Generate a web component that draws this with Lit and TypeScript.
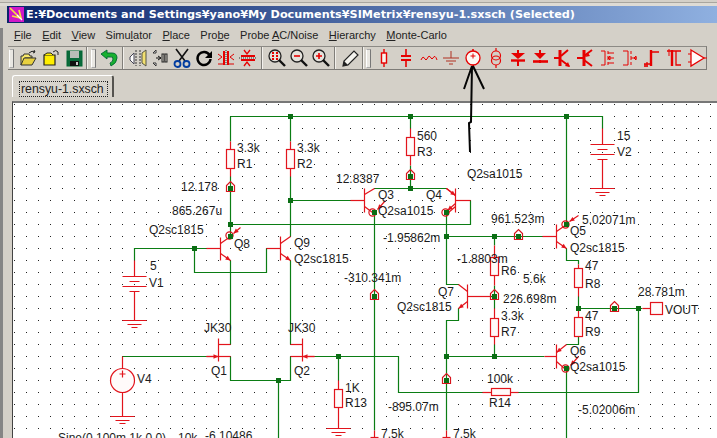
import { LitElement, html, css, svg } from "lit";
import { customElement } from "lit/decorators.js";

type L = [number, number, string];
const WIRES = [
  "230,116 602,116 602,128", "230,116 230,141", "230,176 230,236", "230,260 230,344", "230,356 230,380 290,380 290,356",
  "290,116 290,141", "290,176 290,236", "290,260 290,344", "134,260 134,248 206,248", "194,248 194,272 266,272 266,248",
  "290,200 350,200", "374,188 446,188", "410,116 410,128", "410,165 410,188", "374,212 374,430",
  "446,212 446,284 458,284", "458,308 458,320 446,320 446,430", "470,200 470,224 230,224", "446,236 542,236", "494,236 494,245",
  "494,285 494,308", "490,296 494,296", "494,344 494,356", "446,356 544,356", "566,116 566,224",
  "566,248 566,260 578,260 578,264", "578,296 578,308", "578,336 578,344 566,344", "578,308 642,308", "566,368 566,438",
  "122,356 206,356", "314,356 398,356 398,392 482,392", "518,392 638,392 638,308", "338,356 338,380", "278,380 278,438",
];
const REDS = [
  "230,141 230,149", "230,168 230,176", "290,141 290,149", "290,168 290,176", "410,128 410,137", "410,155 410,165",
  "494,245 494,257", "494,275 494,285", "494,308 494,318", "494,336 494,344", "578,264 578,268", "578,287 578,296",
  "578,308 578,317", "338,380 338,389", "338,407 338,428", "482,392 491,392", "510,392 518,392",
  "642,308 650,308", "374,430 374,438", "446,430 446,438", "122,356 122,368", "122,392 122,416",
  "134,260 134,276", "134,291 134,320", "602,128 602,144", "602,159 602,188",
  "206,248 220,248", "220,237 220,260", "220,243 230,236", "266,248 280,248", "280,236 280,260", "280,243 290,236",
  "350,200 364,200", "364,188 364,212", "364,194 374,188", "364,206 372,212", "455,188 455,212", "446,188 455,195",
  "455,206 448,212", "455,200 470,200", "542,236 556,236", "556,224 556,248", "556,231 566,224",
  "490,296 467,296", "467,284 467,308", "467,291 458,284", "544,356 556,356", "556,344 556,368", "556,361 564,368",
  "218,338 218,361", "218,344 230,344", "218,356 230,356", "302,338 302,361", "290,344 302,344", "290,356 302,356",
  "206,356 218,356", "302,356 314,356", "370,437 378,437", "442,437 450,437",
];
const ARROWS = [
  [220, 253, 230, 260], [280, 253, 290, 260], [556, 241, 566, 248], [240, 227, 233, 233], [385, 200, 377, 209],
  [455, 203, 447, 210], [578, 215, 569, 221], [578, 356, 570, 365], [467, 301, 458, 308],
  [566, 344, 556, 352], [446, 188, 455, 195], [206, 356, 218, 356], [314, 356, 302, 356],
];
const RES = [[226, 149, 8, 19], [286, 149, 8, 19], [406, 137, 8, 18], [490, 257, 8, 18], [490, 318, 8, 18], [574, 268, 8, 19], [574, 317, 8, 19], [334, 389, 8, 18], [491, 388, 19, 7]];
const NODES = [[290, 116], [410, 116], [566, 116], [230, 188], [230, 224], [230, 236], [194, 248], [290, 200], [410, 188], [410, 176], [374, 212], [446, 212], [446, 236], [494, 236], [518, 236], [566, 224], [494, 296], [374, 296], [446, 356], [446, 380], [338, 356], [278, 380], [494, 356], [578, 308], [614, 308], [638, 308], [566, 368]];
const HOUSES = [[230, 188], [410, 176], [518, 236], [374, 296], [446, 380], [494, 296], [614, 308]];
const RINGS = [[229, 235], [372, 212], [445, 212], [565, 224], [565, 368]];
const GNDS = [[602, 188], [134, 320], [122, 416], [338, 428]];
const BATS = [[602, 144], [134, 276]];
const LABELS: L[] = [
  [237, 152, "3.3k"], [237, 168, "R1"], [297, 152, "3.3k"], [297, 168, "R2"], [417, 140, "560"], [417, 156, "R3"],
  [181, 191, "12.178"], [172, 215, "865.267u"], [149, 234, "Q2sc1815"], [234, 248, "Q8"], [294, 247, "Q9"], [294, 263, "Q2sc1815"],
  [336, 183, "12.8387"], [378, 199, "Q3"], [426, 199, "Q4"], [378, 215, "Q2sa1015"], [467, 178, "Q2sa1015"], [383, 242, "-1.95862m"],
  [491, 223, "961.523m"], [582, 224, "5.02071m"], [570, 235, "Q5"], [570, 252, "Q2sc1815"], [617, 140, "15"], [617, 156, "V2"],
  [457, 263, "-1.8803m"], [501, 275, "R6"], [523, 283, "5.6k"], [503, 303, "226.698m"], [501, 320, "3.3k"], [501, 336, "R7"],
  [585, 270, "47"], [585, 288, "R8"], [585, 320, "47"], [585, 336, "R9"], [638, 296, "28.781m"], [665, 314, "VOUT"],
  [570, 355, "Q6"], [570, 371, "Q2sa1015"], [487, 383, "100k"], [489, 407, "R14"], [578, 414, "-5.02006m"], [438, 296, "Q7"],
  [397, 311, "Q2sc1815"], [344, 282, "-310.341m"], [388, 411, "-895.07m"], [288, 332, "JK30"], [204, 332, "JK30"], [211, 375, "Q1"],
  [294, 375, "Q2"], [345, 392, "1K"], [345, 407, "R13"], [381, 438, "7.5k"], [453, 438, "7.5k"], [150, 270, "5"], [149, 287, "V1"],
  [137, 383, "V4"], [58, 442, "Sine(0 100m 1k 0 0)"], [178, 442, "10k"], [205, 440, "-6.10486"],
];

const R = "#e60000";
const ICONS: Record<string, unknown> = {
  open: svg`<path d="M3 17V8h2l1-2h5l1 2h2v2H7L3 17z" fill="#f5e66a" stroke="#333"/><path d="M3 17l3-7h12l-4 7z" fill="#e8d040" stroke="#333"/><path d="M11 5q3-3 6-1M17 4l-1-2M17 4l-2 1" fill="none" stroke="#222"/>`,
  folder: svg`<path d="M3 7h11v10H3z" fill="#ffee00" stroke="#222" stroke-width="1.2"/><path d="M3 7l3-2h4l2 2" fill="#ffee00" stroke="#222"/><path d="M12 4q3-3 5 0v3" fill="none" stroke="#222"/>`,
  floppy: svg`<rect x="3" y="3" width="15" height="15" fill="#0a6a3a" stroke="#063"/><rect x="6" y="3" width="9" height="7" fill="#b9bdb8"/><rect x="6" y="13" width="9" height="5" fill="#111"/><rect x="12" y="14" width="2" height="3" fill="#ccc"/>`,
  undo: svg`<path d="M2 6l6-4v3h5q5 0 5 5t-6 8l-1-3q3-1 3-4t-3-2H8v2z" fill="#18b030" stroke="#063" stroke-width=".9"/>`,
  flipv: svg`<path d="M8 2v16M12 2v16" stroke="#333" stroke-dasharray="2 1" fill="none"/><path d="M6 5L2 9v3l4 4z" fill="#fff" stroke="#445" /><path d="M14 5l4-3v16l-4-3z" fill="#f2e070" stroke="#554"/>`,
  fliph: svg`<path d="M6 2l-3 3h3zM6 18l-3-3h3z" fill="#fff" stroke="#333"/><path d="M6 10h5M8 8l3 2-3 2" stroke="#111" fill="none"/><rect x="12" y="6" width="2" height="8" fill="none" stroke="#222"/><rect x="15" y="6" width="2" height="8" fill="none" stroke="#222"/>`,
  cut: svg`<path d="M4 1l9 12M16 1L7 13" stroke="#111" stroke-width="1.6"/><circle cx="5.5" cy="16" r="3" fill="none" stroke="#003ca0" stroke-width="1.8"/><circle cx="14.5" cy="16" r="3" fill="none" stroke="#003ca0" stroke-width="1.8"/>`,
  rot: svg`<path d="M15.5 7A6.5 6.5 0 1 0 16.5 11" fill="none" stroke="#000" stroke-width="2.4"/><path d="M18 3v7h-7z" fill="#000"/>`,
  mirv: svg`<path d="M8 3v14M12 3v14" stroke="${R}" stroke-width="2"/><path d="M2 6l4 3-4 3M18 6l-4 3 4 3M2 16h5M13 16h5" stroke="#d00" fill="none"/><path d="M10 2v16" stroke="#333" stroke-dasharray="1 1"/>`,
  mirh: svg`<path d="M3 8h14M3 12h14" stroke="${R}" stroke-width="2"/><path d="M6 2l3 4 3-4M6 18l3-4 3 4" stroke="${R}" fill="none" stroke-width="1.3"/><path d="M1 10h18" stroke="#333" stroke-dasharray="1 1"/>`,
  zoomf: svg`<circle cx="8" cy="8" r="6" fill="#e4e2dc" stroke="#222" stroke-width="1.3"/><path d="M12 12l6 6" stroke="#111" stroke-width="2.4"/><path d="M5 5h2M9 5h2M5 8h2M9 8h2M5 11h2M9 11h2" stroke="${R}" stroke-width="2"/>`,
  zoomo: svg`<circle cx="8" cy="8" r="6" fill="#e4e2dc" stroke="#222" stroke-width="1.3"/><path d="M12 12l6 6" stroke="#111" stroke-width="2.4"/><path d="M5 8h6" stroke="${R}" stroke-width="1.6"/>`,
  zoomi: svg`<circle cx="8" cy="8" r="6" fill="#e4e2dc" stroke="#222" stroke-width="1.3"/><path d="M12 12l6 6" stroke="#111" stroke-width="2.4"/><path d="M5 8h6M8 5v6" stroke="${R}" stroke-width="1.6"/>`,
  pencil: svg`<path d="M3 18l1-5L14 3l4 4L8 17z" fill="#f4f3ee" stroke="#222" stroke-width="1.2"/><path d="M3 18l1-5 4 4z" fill="#222"/>`,
  res: svg`<path d="M10 1v18" stroke="${R}" stroke-width="1.4"/><rect x="7.5" y="5" width="5" height="10" fill="#f7f3ee" stroke="${R}" stroke-width="1.4"/>`,
  cap: svg`<path d="M10 1v7M10 12v7" stroke="${R}" stroke-width="1.6"/><path d="M5 8h10M5 12h10" stroke="${R}" stroke-width="2.2"/>`,
  ind: svg`<path d="M2 12q2-5 4-1q1 2 2 0q2-5 4-1q1 2 2 0q2-4 4 2" fill="none" stroke="${R}"/>`,
  gnd: svg`<path d="M10 3v7M2 10h16M5 13h10M8 16h4" stroke="#b03020" fill="none"/>`,
  vsrc: svg`<path d="M10 1v3M10 16v3" stroke="${R}" stroke-width="1.6"/><circle cx="10" cy="10" r="7" fill="#fbf8f4" stroke="${R}" stroke-width="1.3"/><path d="M7.5 8h5M10 5.500v5" stroke="${R}"/>`,
  isrc: svg`<path d="M10 0v3M10 17v3" stroke="${R}" stroke-width="1.2"/><circle cx="10" cy="7.500" r="4.500" fill="none" stroke="${R}" stroke-width="1.2"/><circle cx="10" cy="12.500" r="4.500" fill="none" stroke="${R}" stroke-width="1.2"/>`,
  dio: svg`<path d="M10 2v3M10 12v6" stroke="${R}" stroke-width="2"/><path d="M3 5h14l-7 6z" fill="${R}"/><path d="M3 12.500h14" stroke="${R}" stroke-width="2.400"/>`,
  dio2: svg`<path d="M10 2v3M10 12v3" stroke="${R}" stroke-width="2"/><path d="M4 5h12l-6 6z" fill="${R}"/><path d="M3 13.500h15" stroke="${R}" stroke-width="2.600"/>`,
  npn: svg`<path d="M7 2v16" stroke="${R}" stroke-width="3"/><path d="M1 10h6" stroke="${R}" stroke-width="2"/><path d="M8 8l7-6M8 12l8 6" stroke="${R}" stroke-width="2"/><path d="M17 19l-5-1 3-4z" fill="${R}"/>`,
  pnp: svg`<path d="M9 2v16" stroke="${R}" stroke-width="3"/><path d="M2 10h7" stroke="${R}" stroke-width="2"/><path d="M9 8l8-6M9 12l8 6" stroke="${R}" stroke-width="2"/><path d="M10 9l3-4 2 3z" fill="${R}"/>`,
  nj: svg`<path d="M4 3h4v14H4" fill="none" stroke="${R}"/><path d="M11 3v3M11 8v4M11 14v3M11 5h6M11 15h6M11 10h6M13 8v4l-2-2z" fill="none" stroke="${R}"/>`,
  pj: svg`<path d="M3 3h5v14H3" fill="none" stroke="${R}"/><path d="M11 3v3M11 8v4M11 14v3M11 10h6M16 8v4l-2-2z" fill="none" stroke="${R}"/>`,
  nm: svg`<path d="M9 2v16" stroke="${R}" stroke-width="2.400"/><path d="M9 4h8M9 16H2M3 16v3M5 14v5" fill="none" stroke="${R}" stroke-width="1.300"/><path d="M2 18h4" stroke="${R}"/>`,
  pm: svg`<path d="M8 2v16" stroke="${R}" stroke-width="2.400"/><path d="M3 3h14M12 3v14h5" fill="none" stroke="${R}" stroke-width="1.300"/><path d="M5 1v7" stroke="${R}"/>`,
  opa: svg`<path d="M1 6h3M1 14h3M17 10h3" stroke="${R}"/><path d="M4 2l13 8-13 8z" fill="#fffafa" stroke="${R}" stroke-width="1.300"/>`,
};
const G1 = ["open", "folder", "floppy"];
const G3 = ["flipv", "fliph", "cut", "rot", "mirv", "mirh"];
const G4 = ["zoomf", "zoomo", "zoomi"];
const G5 = ["res", "cap", "ind", "gnd", "vsrc", "isrc", "dio", "dio2", "npn", "pnp", "nj", "pj", "nm", "pm", "opa"];
const MENU: [string, string, string][] = [["", "F", "ile"], ["", "E", "dit"], ["", "V", "iew"], ["Simu", "l", "ator"], ["", "P", "lace"], ["Pro", "b", "e"], ["Probe ", "A", "C/Noise"], ["", "H", "ierarchy"], ["", "M", "onte-Carlo"]];

@customElement("schematic-view")
class SchematicView extends LitElement {
  static styles = css`
    :host { display: block; flex: 1; min-width: 0; overflow: hidden; background: #fff; border-top: 2px solid #777; border-left: 1px solid #444; }
    svg { display: block; }
    .w, .r { fill: none; stroke-width: 1.2; }
    .w { stroke: #0b7d14; }
    .r, .b { stroke: #e2141c; }
    .b { fill: #fffafa; stroke-width: 1.2; }
    .h { fill: none; stroke: #d8141c; stroke-width: 1.2; }
    .n { fill: #0b6e14; }
    .a { fill: #e2141c; }
    .t { font: 12px "Liberation Sans", Arial, sans-serif; fill: #1c1c1c; }
  `;
  render() {
    const dots = [];
    for (let y = 104; y < 438; y += 12) for (let x = 14; x < 717; x += 12) dots.push(`M${x} ${y}h1v1h-1z`);
    return html`<svg width="704" height="335" viewBox="13 103 704 335">
      <path d=${dots.join("")} fill="#222"></path>
      <g transform="translate(.5 .5)">
        ${WIRES.map((p) => svg`<polyline class="w" points=${p}></polyline>`)}
        ${REDS.map((p) => svg`<polyline class="r" points=${p}></polyline>`)}
        ${ARROWS.map(([a, b, c, d]) => {
          const l = Math.hypot(c - a, d - b) || 1, ux = (c - a) / l, uy = (d - b) / l;
          const p = `${c},${d} ${c - 5 * ux - 2.2 * uy},${d - 5 * uy + 2.2 * ux} ${c - 5 * ux + 2.2 * uy},${d - 5 * uy - 2.2 * ux}`;
          return svg`<line class="r" x1=${a} y1=${b} x2=${c} y2=${d}></line><polygon class="a" points=${p}></polygon>`;
        })}
        ${RES.map(([x, y, w, h]) => svg`<rect class="b" x=${x} y=${y} width=${w} height=${h}></rect>`)}
        ${BATS.map(([x, y]) => svg`<path class="r" d="M${x - 12} ${y}h24M${x - 5} ${y + 5}h10M${x - 12} ${y + 10}h24M${x - 5} ${y + 15}h10"></path>`)}
        ${GNDS.map(([x, y]) => svg`<path class="r" d="M${x - 12} ${y}h24M${x - 7} ${y + 4}h14M${x - 3} ${y + 7}h6"></path>`)}
        <circle class="b" cx="122" cy="380" r="12"></circle>
        <path class="r" d="M122 370v7M119 373.500h6"></path>
        <rect class="b" x="650" y="302" width="12" height="12"></rect>
        ${HOUSES.map(([x, y]) => svg`<path class="h" d="M${x - 4} ${y + 3}v-6l4-4 4 4v6z"></path>`)}
        ${RINGS.map(([x, y]) => svg`<circle class="h" cx=${x} cy=${y} r="3.600"></circle>`)}
      </g>
      ${NODES.map(([x, y]) => svg`<rect class="n" x=${x - 2} y=${y - 2} width="5" height="5"></rect>`)}
      ${LABELS.map(([x, y, s]) => svg`<text class="t" x=${x} y=${y}>${s}</text>`)}
    </svg>`;
  }
}

@customElement("app-root")
export class AppRoot extends LitElement {
  static styles = css`
    :host { display: block; position: relative; width: 717px; height: 438px; overflow: hidden; background: #d4d0c8; color: #111; font-family: "Liberation Sans", Arial, sans-serif; }
    .top { border-top: 1px solid #a9a69f; margin-top: 2px; box-sizing: border-box; height: 4px; background: #dedbd4; }
    .title { margin-left: 7px; height: 17px; display: flex; align-items: center; gap: 2px; color: #fff; font: bold 11.250px "DejaVu Sans", sans-serif; white-space: nowrap; background: linear-gradient(90deg, #0a246a, #8fb0e0); }
    .logo { margin-left: 2px; flex: none; }
    .body { display: flex; height: 415px; }
    .rail { width: 3px; flex: none; margin-top: 5px; background: #858585; }
    .main { flex: 1; min-width: 0; display: flex; flex-direction: column; }
    .menu { height: 23px; flex: none; display: flex; align-items: center; gap: 10.400px; padding: 1px 0 0 11px; box-sizing: border-box; font-size: 11px; color: #222; white-space: nowrap; }
    .menu u { text-underline-offset: 1px; }
    .bar { height: 24px; flex: none; box-sizing: border-box; margin-left: 5px; display: flex; align-items: center; border-top: 1px solid #8c8a85; border-bottom: 1px solid #7d7b77; width: 699px; border-right: 1px solid #7d7b77; }
    .grip { width: 5px; height: 19px; box-sizing: border-box; border: 1px solid #aaa; border-left-color: #fff; border-right-color: #777; background: #e9e7e2; flex: none; }
    .g1 { margin: 0 2px 0 1px; }
    .sep { width: 2px; box-sizing: border-box; height: 22px; background: #807e79; border-right: 1px solid #f2f0ec; flex: none; }
    .s1 { margin: 0 2px 0 1px; } .s2 { margin: 0 3px 0 2px; } .s3 { margin: 0 1px; }
    .btn { height: 22px; display: flex; align-items: center; justify-content: center; flex: none; }
    .btn svg { display: block; }
    .w23 { width: 23px; } .w22 { width: 22px; } .w223 { width: 22.330px; }
    .tabs { height: 31px; flex: none; padding: 5px 0 0 9px; box-sizing: border-box; }
    .tab { width: 102px; height: 22px; box-sizing: border-box; background: #d8d4cc; border-left: 1px solid #fff; border-top: 1px solid #fff; border-right: 2px solid #55534f; border-radius: 3px 3px 0 0; padding: 3px 0 0 6px; }
    .focus { display: inline-block; height: 16px; line-height: 14px; border: 1px dotted #222; box-sizing: border-box; padding: 0 3px 0 1px; font-size: 12.300px; color: #222; }
    .canvas { flex: 1; min-height: 0; display: flex; padding-left: 9px; }
    .hand { position: absolute; left: 0; top: 0; pointer-events: none; }
  `;
  private ic(name: string, w: string) {
    return html`<span class="btn ${w}"><svg width="20" height="20" viewBox="0 0 20 20">${ICONS[name]}</svg></span>`;
  }
  render() {
    return html`
      <div class="top"></div>
      <div class="title">
        <svg class="logo" width="15" height="15" viewBox="0 0 15 15"><rect width="15" height="15" fill="#d018c8"></rect><path d="M1 1l9 9M3 9l9 2-2-8" stroke="#f5e040" stroke-width="1.700" fill="none"></path><path d="M8 8l5 5" stroke="#fff" stroke-width="1.300"></path></svg>
        <span>E:¥Documents and Settings¥yano¥My Documents¥SIMetrix¥rensyu-1.sxsch (Selected)</span>
      </div>
      <div class="body">
        <div class="rail"></div>
        <div class="main">
          <div class="menu">${MENU.map(([a, b, c]) => html`<span>${a}<u>${b}</u>${c}</span>`)}</div>
          <div class="bar">
            <span class="grip g1"></span>${G1.map((n) => this.ic(n, "w23"))}<span class="sep s1"></span>
            <span class="grip g1"></span>${this.ic("undo", "w22")}<span class="sep s2"></span>
            ${G3.map((n) => this.ic(n, "w22"))}<span class="sep s2"></span>
            ${G4.map((n) => this.ic(n, "w22"))}<span class="sep s2"></span>
            ${this.ic("pencil", "w22")}<span class="sep s3"></span>
            <span class="grip g1"></span>${G5.map((n) => this.ic(n, "w223"))}
          </div>
          <div class="tabs"><div class="tab"><span class="focus">rensyu-1.sxsch</span></div></div>
          <div class="canvas"><schematic-view></schematic-view></div>
        </div>
      </div>
      <svg class="hand" width="717" height="438" viewBox="0 0 717 438" fill="none" stroke="#050505" stroke-width="2">
        <path d="M470 152l-1-29 2-1 1-56M472 66l-8 23M473 66l11 23"></path>
      </svg>
    `;
  }
}
